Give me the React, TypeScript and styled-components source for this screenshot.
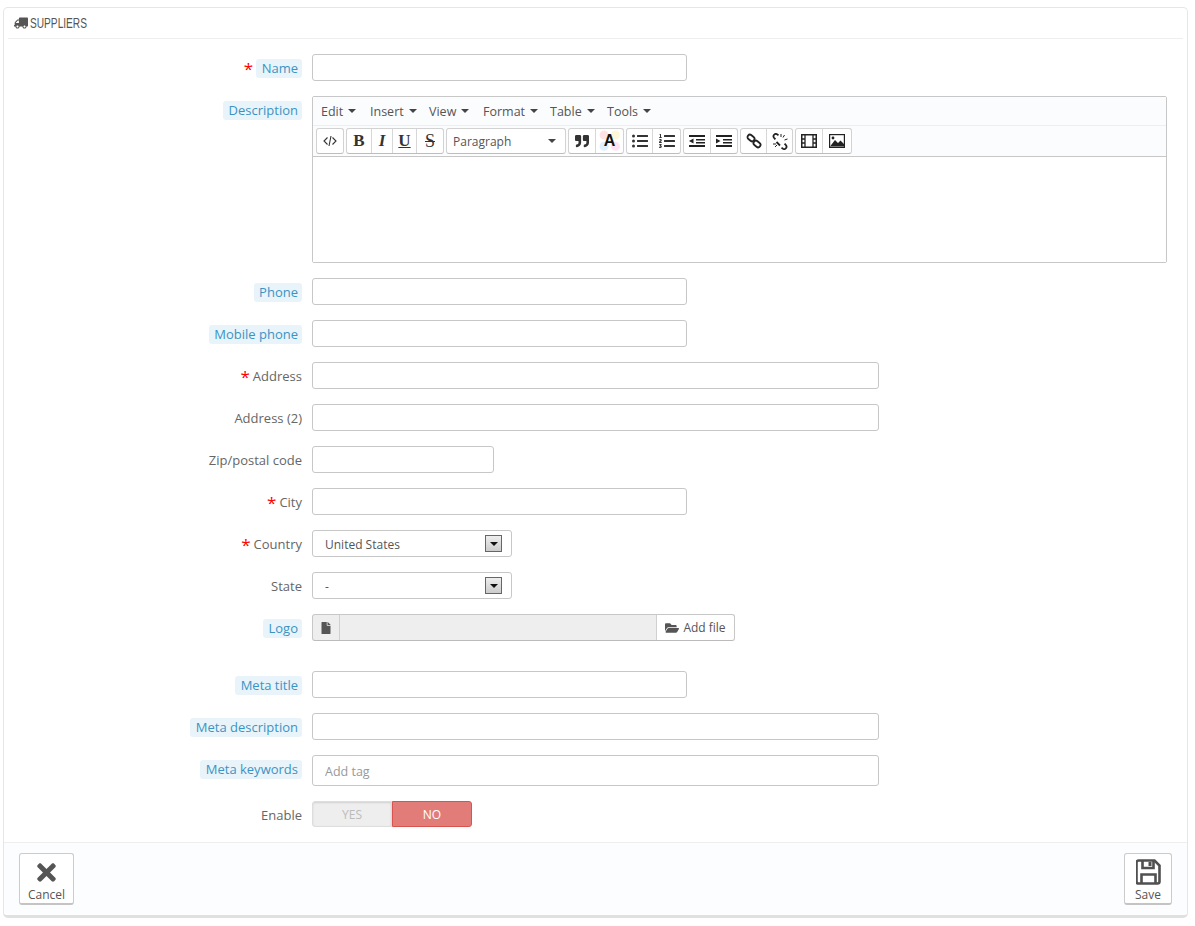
import { FC, ReactNode } from "react";
import styled, { createGlobalStyle } from "styled-components";
import {
  FaFile,
  FaFolderOpen,
  FaListOl,
  FaListUl,
  FaQuoteRight,
  FaTimes,
  FaTruck,
} from "react-icons/fa";

const GlobalStyle = createGlobalStyle`
  html, body {
    margin: 0;
    background: #fff;
    font-family: "Open Sans", "Liberation Sans", sans-serif;
    font-size: 13px;
    color: #555;
  }
  * { box-sizing: border-box; }
`;

const Page = styled.div`
  width: 1195px;
  height: 926px;
  padding: 7px 7px 0 3px;
`;

const Panel = styled.div`
  height: 911px;
  background: #fff;
  border: 1px solid #e6e6e6;
  border-bottom: 3px solid #e0e0e0;
  border-radius: 5px;
  display: flex;
  flex-direction: column;
`;

const PanelHeading = styled.div`
  height: 31px;
  margin: 0 4px;
  padding-left: 6px;
  border-bottom: 1px solid #eee;
  display: flex;
  align-items: center;
  gap: 2px;
  color: #555;
`;

const HeadingText = styled.span`
  display: inline-block;
  font-family: "Liberation Sans", sans-serif;
  font-size: 14.5px;
  text-transform: uppercase;
  transform: scaleX(0.7);
  transform-origin: left center;
`;

const TruckIcon = styled(FaTruck)`
  font-size: 14px;
  transform: scaleX(-1);
`;

const Form = styled.form`
  flex: 1;
  padding-top: 15px;
`;

const Row = styled.div<{ $gap?: number }>`
  display: flex;
  gap: 10px;
  margin-bottom: ${({ $gap }) => $gap ?? 15}px;
`;

const LabelCol = styled.div`
  width: 298px;
  flex: none;
  display: flex;
  justify-content: flex-end;
  align-items: flex-start;
`;

const LabelRow = styled.div`
  display: flex;
  align-items: center;
  gap: 3px;
  height: 19px;
  margin-top: 5px;
`;

const Star = styled.span`
  color: #f00;
  font-size: 17px;
  line-height: 17px;
`;

const LabelText = styled.label<{ $hint?: boolean }>`
  height: 19px;
  line-height: 19px;
  white-space: nowrap;
  padding: ${({ $hint }) => ($hint ? "0 4px 0 5.5px" : "0")};
  border-radius: 3px;
  background: ${({ $hint }) => ($hint ? "#e9f4fa" : "transparent")};
  color: ${({ $hint }) => ($hint ? "#3b93c3" : "#666")};
`;

const TextInput = styled.input<{ $width: number; $tall?: boolean }>`
  display: block;
  width: ${({ $width }) => $width}px;
  height: ${({ $tall }) => ($tall ? 31 : 27)}px;
  padding: ${({ $tall }) => ($tall ? "2px 12px 0" : "0 12px")};
  background: #fff;
  border: 1px solid #c7c7c7;
  border-radius: 3px;
  outline: none;
  font: inherit;
  font-size: 12.5px;
  color: #555;
  &::placeholder {
    color: #999;
    opacity: 1;
  }
`;

const Editor = styled.div`
  width: 855px;
  height: 167px;
  border: 1px solid #c7c7c7;
  border-radius: 2px;
  display: flex;
  flex-direction: column;
`;

const MenuBar = styled.div`
  height: 29px;
  padding-left: 8px;
  background: #fbfcfe;
  border-bottom: 1px solid #eee;
  display: flex;
  align-items: center;
`;

const MenuItem = styled.div<{ $width: number }>`
  width: ${({ $width }) => $width}px;
  display: flex;
  align-items: center;
  gap: 5px;
  color: #555;
  font-size: 12.5px;
`;

const Caret = styled.span`
  width: 0;
  height: 0;
  border-left: 4px solid transparent;
  border-right: 4px solid transparent;
  border-top: 4px solid #444;
`;

const ToolBar = styled.div`
  height: 31px;
  padding: 2px 3px 0;
  background: #fbfcfe;
  border-bottom: 1px solid #c7c7c7;
  display: flex;
  gap: 2px;
`;

const ToolGroup = styled.div`
  height: 26px;
  display: flex;
  background: #fff;
  border: 1px solid #d2d2d2;
  border-bottom-color: #bdbdbd;
  border-radius: 3px;
`;

const ToolButton = styled.button<{ $width: number }>`
  width: ${({ $width }) => $width}px;
  height: 24px;
  padding: 0;
  background: transparent;
  border: 0;
  border-right: 1px solid #d7d7d7;
  color: #333;
  font-size: 16px;
  display: flex;
  align-items: center;
  justify-content: center;
  &:last-child {
    border-right: 0;
  }
`;

const SerifGlyph = styled.span<{ $kind: "b" | "i" | "u" | "s" }>`
  font-family: "Liberation Serif", serif;
  font-size: ${({ $kind }) => ($kind === "s" ? 18 : 17)}px;
  font-weight: ${({ $kind }) => ($kind === "s" ? 400 : 700)};
  font-style: ${({ $kind }) => ($kind === "i" ? "italic" : "normal")};
  text-decoration: ${({ $kind }) =>
    $kind === "u" ? "underline" : $kind === "s" ? "line-through" : "none"};
  color: #333;
`;

const FontColorGlyph = styled.span`
  width: 100%;
  height: 100%;
  display: flex;
  align-items: center;
  justify-content: center;
  font-family: "Liberation Sans", sans-serif;
  font-size: 16px;
  font-weight: 700;
  color: #111;
  background:
    radial-gradient(circle at 30% 25%, #ffe3e3 0 4px, transparent 5px),
    radial-gradient(circle at 72% 25%, #fff6d8 0 4px, transparent 5px),
    radial-gradient(circle at 30% 72%, #dff0ff 0 4px, transparent 5px),
    radial-gradient(circle at 72% 72%, #ffe3f3 0 4px, transparent 5px);
`;

const FormatSelect = styled.div`
  width: 120px;
  height: 26px;
  padding: 0 9px 0 6px;
  background: #fff;
  border: 1px solid #d2d2d2;
  border-bottom-color: #bdbdbd;
  border-radius: 3px;
  display: flex;
  align-items: center;
  justify-content: space-between;
  font-size: 12px;
`;

const EditorBody = styled.div`
  flex: 1;
  background: #fff;
`;

const SelectBox = styled.div`
  width: 200px;
  height: 27px;
  padding: 2px 9px 0 12px;
  background: #fff;
  border: 1px solid #c7c7c7;
  border-radius: 3px;
  display: flex;
  align-items: center;
  justify-content: space-between;
  font-size: 12px;
`;

const SelectArrow = styled.span`
  width: 17px;
  height: 17px;
  margin-top: -2px;
  border: 1px solid #666;
  background: linear-gradient(#eee, #ccc);
  display: flex;
  align-items: center;
  justify-content: center;
  & > span {
    margin-top: 1px;
    border-top-color: #111;
  }
`;

const FileGroup = styled.div`
  width: 423px;
  height: 27px;
  display: flex;
  background: #eee;
  border: 1px solid #c7c7c7;
  border-bottom-color: #bbb;
  border-radius: 3px;
`;

const FileIcon = styled.div`
  width: 27px;
  border-right: 1px solid #d0d0d0;
  display: flex;
  align-items: center;
  justify-content: center;
  color: #555;
  font-size: 12px;
`;

const FileName = styled.div`
  flex: 1;
`;

const AddFile = styled.button`
  width: 78px;
  padding: 0;
  background: #fff;
  border: 0;
  border-left: 1px solid #d0d0d0;
  border-radius: 0 3px 3px 0;
  display: flex;
  align-items: center;
  justify-content: center;
  gap: 4px;
  font: inherit;
  font-size: 12px;
  color: #555;
  & > svg {
    font-size: 14px;
  }
`;

const Toggle = styled.div`
  width: 160px;
  height: 26px;
  display: flex;
`;

const ToggleOption = styled.div<{ $active?: boolean }>`
  flex: 1;
  display: flex;
  align-items: center;
  justify-content: center;
  font-size: 12px;
  border-radius: ${({ $active }) => ($active ? "0 3px 3px 0" : "3px 0 0 3px")};
  background: ${({ $active }) => ($active ? "#e27c79" : "#eee")};
  color: ${({ $active }) => ($active ? "#fff" : "#bbb")};
  border: 1px solid ${({ $active }) => ($active ? "#d9534f" : "#ddd")};
  box-shadow: ${({ $active }) =>
    $active ? "none" : "inset 0 1px 2px rgba(0,0,0,0.12)"};
`;

const PanelFooter = styled.div`
  height: 73px;
  padding: 10px 15px 0;
  background: #fcfdfe;
  border-top: 1px solid #eee;
  border-radius: 0 0 5px 5px;
  display: flex;
  justify-content: space-between;
  align-items: flex-start;
`;

const FooterButton = styled.button<{ $width: number }>`
  width: ${({ $width }) => $width}px;
  height: 52px;
  padding: 0;
  background: #fff;
  border: 1px solid #ccc;
  border-bottom: 2px solid #c4c4c4;
  border-radius: 3px;
  display: flex;
  flex-direction: column;
  align-items: center;
  font: inherit;
  font-size: 12px;
  color: #555;
`;

const FooterIcon = styled.span`
  height: 31px;
  margin-top: 4px;
  display: flex;
  align-items: center;
  justify-content: center;
  font-size: 27px;
  color: #555;
`;

const CodeIcon = () => (
  <svg width="14" height="14" viewBox="0 0 14 14" fill="none" stroke="#333" strokeWidth="1.1">
    <path d="M4.5 3.5 1 7l3.5 3.5M9.5 3.5 13 7l-3.5 3.5M8 2 6 12" />
  </svg>
);

const OutdentIcon = () => (
  <svg width="16" height="14" viewBox="0 0 16 14" fill="#222">
    <path d="M0 1h16v2H0zM7 5h9v1.5H7zM7 8h9v1.5H7zM0 11h16v2H0zM4.5 4.5v5L0 7z" />
  </svg>
);

const IndentIcon = () => (
  <svg width="16" height="14" viewBox="0 0 16 14" fill="#222">
    <path d="M0 1h16v2H0zM7 5h9v1.5H7zM7 8h9v1.5H7zM0 11h16v2H0zM0 4.5v5L4.5 7z" />
  </svg>
);

const LinkIcon = () => (
  <svg width="16" height="16" viewBox="0 0 16 16" fill="none" stroke="#222" strokeWidth="1.8">
    <rect x="1.2" y="2.6" width="7.6" height="4.8" rx="2.4" transform="rotate(40 5 5)" />
    <rect x="7.2" y="8.6" width="7.6" height="4.8" rx="2.4" transform="rotate(40 11 11)" />
  </svg>
);

const UnlinkIcon = () => (
  <svg width="16" height="17" viewBox="0 0 16 17" fill="none" stroke="#222" strokeWidth="1.8">
    <path d="M6.5 2.2 5 1.2A2.4 2.4 0 0 0 2 4.8l1.4 1.6" />
    <path d="M9.5 14.8l1.5 1A2.4 2.4 0 0 0 14 12.2l-1.4-1.6" />
    <path d="M4.5 9 8 12.5" />
    <path d="M9 1v3M12.5 2 11 4.5M15.5 6l-3 1M1 11h3M3 14l2-2" strokeWidth="1" />
  </svg>
);

const FilmIcon = () => (
  <svg width="16" height="14" viewBox="0 0 16 14" fill="none" stroke="#222">
    <rect x="0.75" y="0.75" width="14.5" height="12.5" strokeWidth="1.5" />
    <path d="M4 1v12M12 1v12M1 5h3M1 9h3M12 5h3M12 9h3" strokeWidth="1.3" />
  </svg>
);

const PictureIcon = () => (
  <svg width="16" height="14" viewBox="0 0 16 14">
    <rect x="0.6" y="0.6" width="14.8" height="12.8" fill="#fff" stroke="#222" strokeWidth="1.2" />
    <path d="M1 12.5 6 6l3 3 2.5-2.5 3.5 3.5v2.5z" fill="#222" />
    <circle cx="4" cy="4" r="1.4" fill="#222" />
  </svg>
);

const SaveIcon = () => (
  <svg width="25" height="26" viewBox="0 0 25 26" fill="none" stroke="#505050" strokeWidth="2.6">
    <path d="M2.5 1.5h16l5 5v16a2 2 0 0 1-2 2h-19a2 2 0 0 1-2-2v-19a2 2 0 0 1 2-2z" />
    <path d="M6.5 1.5v7.5h11V1.5" />
    <path d="M5.5 24v-8.5h14V24" />
    <path d="M14 3v4" strokeWidth="3" />
  </svg>
);

type FieldProps = {
  label: string;
  required?: boolean;
  hint?: boolean;
  gap?: number;
  children: ReactNode;
};

const Field: FC<FieldProps> = ({ label, required, hint, gap, children }) => (
  <Row $gap={gap}>
    <LabelCol>
      <LabelRow>
        {required && <Star>*</Star>}
        <LabelText $hint={hint}>{label}</LabelText>
      </LabelRow>
    </LabelCol>
    {children}
  </Row>
);

const menuItems = [
  { title: "Edit", width: 49 },
  { title: "Insert", width: 59 },
  { title: "View", width: 54 },
  { title: "Format", width: 67 },
  { title: "Table", width: 57 },
  { title: "Tools", width: 60 },
];

const App: FC = () => (
  <Page>
    <GlobalStyle />
    <Panel>
      <PanelHeading>
        <TruckIcon />
        <HeadingText>Suppliers</HeadingText>
      </PanelHeading>
      <Form>
        <Field label="Name" required hint>
          <TextInput $width={375} />
        </Field>
        <Field label="Description" hint>
          <Editor>
            <MenuBar>
              {menuItems.map((item) => (
                <MenuItem key={item.title} $width={item.width}>
                  {item.title}
                  <Caret />
                </MenuItem>
              ))}
            </MenuBar>
            <ToolBar>
              <ToolGroup>
                <ToolButton $width={26}><CodeIcon /></ToolButton>
              </ToolGroup>
              <ToolGroup>
                <ToolButton $width={25}><SerifGlyph $kind="b">B</SerifGlyph></ToolButton>
                <ToolButton $width={21}><SerifGlyph $kind="i">I</SerifGlyph></ToolButton>
                <ToolButton $width={24}><SerifGlyph $kind="u">U</SerifGlyph></ToolButton>
                <ToolButton $width={26}><SerifGlyph $kind="s">S</SerifGlyph></ToolButton>
              </ToolGroup>
              <FormatSelect>
                Paragraph
                <Caret />
              </FormatSelect>
              <ToolGroup>
                <ToolButton $width={27}><FaQuoteRight size={14} /></ToolButton>
                <ToolButton $width={27}><FontColorGlyph>A</FontColorGlyph></ToolButton>
              </ToolGroup>
              <ToolGroup>
                <ToolButton $width={26}><FaListUl /></ToolButton>
                <ToolButton $width={27}><FaListOl /></ToolButton>
              </ToolGroup>
              <ToolGroup>
                <ToolButton $width={27}><OutdentIcon /></ToolButton>
                <ToolButton $width={26}><IndentIcon /></ToolButton>
              </ToolGroup>
              <ToolGroup>
                <ToolButton $width={26}><LinkIcon /></ToolButton>
                <ToolButton $width={25}><UnlinkIcon /></ToolButton>
              </ToolGroup>
              <ToolGroup>
                <ToolButton $width={27}><FilmIcon /></ToolButton>
                <ToolButton $width={28}><PictureIcon /></ToolButton>
              </ToolGroup>
            </ToolBar>
            <EditorBody />
          </Editor>
        </Field>
        <Field label="Phone" hint>
          <TextInput $width={375} />
        </Field>
        <Field label="Mobile phone" hint>
          <TextInput $width={375} />
        </Field>
        <Field label="Address" required>
          <TextInput $width={567} />
        </Field>
        <Field label="Address (2)">
          <TextInput $width={567} />
        </Field>
        <Field label="Zip/postal code">
          <TextInput $width={182} />
        </Field>
        <Field label="City" required>
          <TextInput $width={375} />
        </Field>
        <Field label="Country" required>
          <SelectBox>
            United States
            <SelectArrow><Caret /></SelectArrow>
          </SelectBox>
        </Field>
        <Field label="State">
          <SelectBox>
            -
            <SelectArrow><Caret /></SelectArrow>
          </SelectBox>
        </Field>
        <Field label="Logo" hint gap={30}>
          <FileGroup>
            <FileIcon><FaFile /></FileIcon>
            <FileName />
            <AddFile type="button">
              <FaFolderOpen />
              Add file
            </AddFile>
          </FileGroup>
        </Field>
        <Field label="Meta title" hint>
          <TextInput $width={375} />
        </Field>
        <Field label="Meta description" hint>
          <TextInput $width={567} />
        </Field>
        <Field label="Meta keywords" hint>
          <TextInput $width={567} $tall placeholder="Add tag" />
        </Field>
        <Field label="Enable" gap={0}>
          <Toggle>
            <ToggleOption>YES</ToggleOption>
            <ToggleOption $active>NO</ToggleOption>
          </Toggle>
        </Field>
      </Form>
      <PanelFooter>
        <FooterButton $width={55} type="button">
          <FooterIcon><FaTimes /></FooterIcon>
          Cancel
        </FooterButton>
        <FooterButton $width={48} type="button">
          <FooterIcon><SaveIcon /></FooterIcon>
          Save
        </FooterButton>
      </PanelFooter>
    </Panel>
  </Page>
);

export default App;
